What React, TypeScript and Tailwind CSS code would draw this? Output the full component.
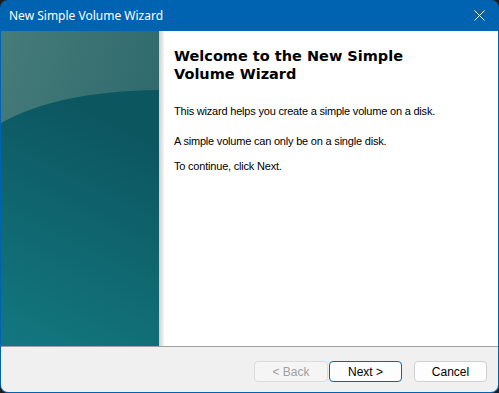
import React from 'react';

const Panel: React.FC = () => (
  <svg className="block w-full h-full" viewBox="0 0 158 315" preserveAspectRatio="none">
    <defs>
      <linearGradient id="top" x1="0" y1="0" x2="1" y2="0.6">
        <stop offset="0" stopColor="#467c7a" />
        <stop offset="1" stopColor="#2b666a" />
      </linearGradient>
      <linearGradient id="low" x1="0.3" y1="0" x2="0" y2="1">
        <stop offset="0" stopColor="#0c5660" />
        <stop offset="1" stopColor="#137880" />
      </linearGradient>
    </defs>
    <rect width="158" height="315" fill="url(#top)" />
    <path d="M0,92 C40,70 90,60 158,59 L158,315 L0,315 Z" fill="url(#low)" />
  </svg>
);

const App: React.FC = () => {
  return (
    <div className="w-[499px] h-[393px] bg-[#1c1c1c] font-['Liberation_Sans',sans-serif]">
      <div className="w-full h-full flex flex-col bg-[#0063b1] rounded-t-[8px] rounded-b-[8px] overflow-hidden">
        <div className="h-[31px] shrink-0 flex items-center justify-between pl-[9px] pr-[12px] text-white text-[12px] font-['Noto_Sans',sans-serif]">
          <span>New Simple Volume Wizard</span>
          <svg width="11" height="11" viewBox="0 0 11 11" className="mr-[2px]">
            <path d="M0.5 0.5 L10.5 10.5 M10.5 0.5 L0.5 10.5" stroke="#fff" strokeWidth="1" />
          </svg>
        </div>
        <div className="flex-1 flex flex-col mx-[1px] mb-[1px] rounded-b-[7px] overflow-hidden">
          <div className="h-[315px] flex bg-white">
            <div className="w-[158px] shrink-0">
              <Panel />
            </div>
            <div className="w-[5px] shrink-0 bg-gradient-to-r from-[#cfcfcf] to-[#f4f4f4]" />
            <div className="flex-1 pl-[10px] pt-[16px] text-black">
              <h1 className="font-['DejaVu_Sans',sans-serif] font-bold text-[14.5px] leading-[18px] w-[270px]">
                Welcome to the New Simple Volume Wizard
              </h1>
              <p className="mt-[21px] text-[11px] leading-[14px] tracking-[-0.2px]">This wizard helps you create a simple volume on a disk.</p>
              <p className="mt-[16px] text-[11px] leading-[14px] tracking-[-0.2px]">A simple volume can only be on a single disk.</p>
              <p className="mt-[11px] text-[11px] leading-[14px] tracking-[-0.2px]">To continue, click Next.</p>
            </div>
          </div>
          <div className="h-px bg-[#a0a0a0]" />
          <div className="flex-1 bg-[#f0f0f0] flex items-start pt-[14px] pl-[253px] text-[12px]">
            <button className="w-[74px] h-[21px] rounded-[4px] border border-[#dcdcdc] bg-[#f5f5f5] text-[#a0a0a0]">&lt; Back</button>
            <button className="ml-[1px] w-[73px] h-[21px] rounded-[4px] border border-[#0067c0] bg-[#fdfdfd] text-black">Next &gt;</button>
            <button className="ml-[12px] w-[73px] h-[21px] rounded-[4px] border border-[#d0d0d0] bg-[#fdfdfd] text-black">Cancel</button>
          </div>
        </div>
      </div>
    </div>
  );
};

export default App;
